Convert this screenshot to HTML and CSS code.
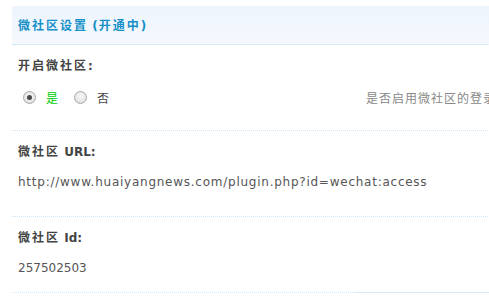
FILE: index.html
```html
<!DOCTYPE html>
<html lang="zh-CN">
<head>
<meta charset="utf-8">
<title>微社区设置</title>
<link rel="stylesheet" href="styles.css">
</head>
<body>
<div class="page">
  <div class="partition">微社区设置<span class="lat"> (</span>开通中<span class="lat">)</span></div>

  <div class="section">
    <div class="label">开启微社区<span class="lat">:</span></div>
    <div class="row">
      <div class="options">
        <label class="opt checked"><span class="radio"></span><span class="opt-text">是</span></label>
        <label class="opt"><span class="radio"></span><span class="opt-text">否</span></label>
      </div>
      <div class="tips">是否启用微社区的登录入口</div>
    </div>
  </div>

  <div class="section section-url">
    <div class="label">微社区<span class="lat"> URL:</span></div>
    <div class="value value-url">http://www.huaiyangnews.com/plugin.php?id=wechat:access</div>
  </div>

  <div class="section section-last">
    <div class="label">微社区<span class="lat"> Id:</span></div>
    <div class="value">257502503</div>
  </div>

  <div class="rule">
    <span class="rule-dotted"></span>
    <span class="rule-solid"></span>
  </div>
</div>
</body>
</html>
```

FILE: styles.css
```css
html, body {
  margin: 0;
  padding: 0;
  background: #fff;
  overflow: hidden;
}

body {
  font-family: "DejaVu Sans", "Noto Sans CJK SC", sans-serif;
  font-size: 12px;
  color: #555;
}

.page {
  padding: 6px 0 0 12px;
  width: 700px;
}

.partition {
  height: 38px;
  line-height: 38px;
  padding-left: 6px;
  background: linear-gradient(#edf4fc, #f5f9fe);
  border-bottom: 1px dotted #bfe0f6;
  color: #1590c8;
  font-weight: bold;
  letter-spacing: 2px;
  font-family: "Noto Sans CJK SC", "DejaVu Sans", sans-serif;
}

.lat {
  font-family: "DejaVu Sans", sans-serif;
  letter-spacing: 0;
}

.partition .lat {
  padding-right: 1px;
}

.section {
  padding: 13px 0 26px 6px;
  border-bottom: 1px dotted #cfe6f7;
}

.section-url {
  padding-bottom: 27px;
}

.section-last {
  padding-bottom: 17px;
  border-bottom: 0;
}

.label {
  line-height: 14px;
  height: 14px;
  font-weight: bold;
  color: #444;
  letter-spacing: 2px;
  font-family: "Noto Sans CJK SC", "DejaVu Sans", sans-serif;
}

.value {
  margin-top: 17px;
  line-height: 14px;
  height: 14px;
  color: #555;
  white-space: nowrap;
}

.value-url {
  letter-spacing: 0.75px;
}

.row {
  margin-top: 18px;
  height: 14px;
  display: flex;
  align-items: center;
}

.options {
  width: 348px;
  flex: none;
  display: flex;
  align-items: center;
  gap: 16px;
  padding-left: 5px;
  box-sizing: border-box;
}

.opt {
  display: flex;
  align-items: center;
  gap: 10px;
  font-family: "Noto Sans CJK SC", sans-serif;
  color: #444;
}

.opt.checked .opt-text {
  color: #00cc00;
}

.radio {
  width: 11px;
  height: 11px;
  border: 1px solid #a9a9a9;
  border-radius: 50%;
  background: radial-gradient(circle at 50% 40%, #f8f8f8 0%, #e6e6e6 60%, #d2d2d2 100%);
  display: flex;
  align-items: center;
  justify-content: center;
}

.opt.checked .radio::after {
  content: "";
  width: 5px;
  height: 5px;
  border-radius: 50%;
  background: #4a4a4a;
}

.tips {
  white-space: nowrap;
  color: #888;
  font-family: "Noto Sans CJK SC", sans-serif;
  letter-spacing: 1px;
}

.rule {
  display: flex;
  height: 1px;
}

.rule-dotted {
  width: 345px;
  border-top: 1px dotted #cfe6f7;
}

.rule-solid {
  flex: 1;
  border-top: 1px solid #dbe7f0;
}
```
